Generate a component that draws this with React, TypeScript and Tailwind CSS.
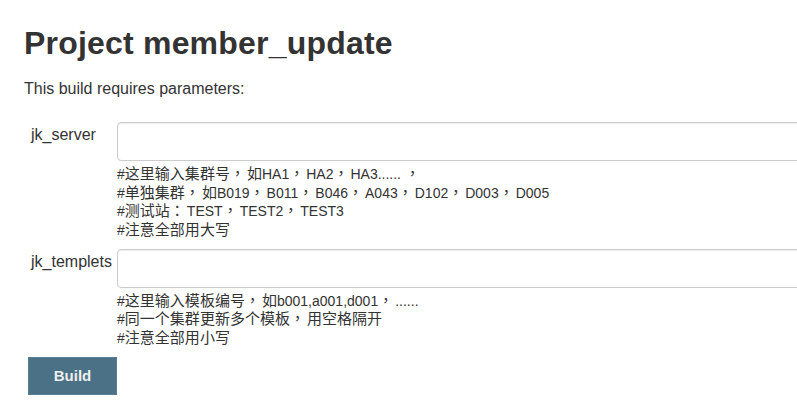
const font = { fontFamily: '"Liberation Sans", "Noto Sans CJK SC", Arial, sans-serif' };
const punctFont = { fontFamily: '"Noto Sans CJK TC", "Noto Sans CJK SC", sans-serif' };

interface Param {
  name: string;
  help: string[];
}

const params: Param[] = [
  {
    name: 'jk_server',
    help: [
      '#这里输入集群号，如HA1，HA2，HA3...... ，',
      '#单独集群，如B019，B011，B046，A043，D102，D003，D005',
      '#测试站：TEST，TEST2，TEST3',
      '#注意全部用大写',
    ],
  },
  {
    name: 'jk_templets',
    help: ['#这里输入模板编号，如b001,a001,d001，......', '#同一个集群更新多个模板，用空格隔开', '#注意全部用小写'],
  },
];

// CJK runs render a touch larger than the latin text, like the original page's fallback font
function HelpLine({ text }: { text: string }) {
  const parts = text.split(/([\u3000-\u303f\u4e00-\u9fff\uff00-\uffef]+)/).filter(Boolean);
  return (
    <div>
      {parts.map((part, i) =>
        /[\u3000-\u303f\u4e00-\u9fff\uff00-\uffef]/.test(part) ? (
          <span key={i} className="text-[15px]">
            {part.split('').map((ch, j) =>
              ch === '，' || ch === '：' ? (
                <span key={j} className="tracking-[2px] leading-[0]" style={punctFont}>
                  {ch}
                </span>
              ) : (
                ch
              )
            )}
          </span>
        ) : (
          <span key={i}>{part}</span>
        )
      )}
    </div>
  );
}

export default function App() {
  return (
    <div className="w-[797px] h-[408px] overflow-hidden bg-white text-[#333]" style={font}>
      <div className="px-6 pt-[26px]">
        <h1 className="text-[32px] leading-[35px] font-bold tracking-[0.2px]">Project member_update</h1>
        <p className="mt-[17.5px] text-[16px] leading-[20px]">This build requires parameters:</p>

        {/* Parameter rows */}
        <div className="mt-[23.5px] flex flex-col gap-[9.5px]">
          {params.map((p) => (
            <div key={p.name} className="flex">
              <div className="w-[93px] shrink-0 pl-[7px] pt-[3px] text-[16px] leading-[20px]">{p.name}</div>
              <div className="flex-1 min-w-0">
                <input
                  type="text"
                  className="block w-[720px] h-[39px] rounded-[4px] border border-[#ccc] bg-white px-3 shadow-[inset_0_1px_1px_rgba(0,0,0,0.075)] outline-none"
                />
                <div className="mt-[4px] text-[14px] leading-[18.5px] text-[#333] whitespace-nowrap">
                  {p.help.map((line, i) => (
                    <HelpLine key={i} text={line} />
                  ))}
                </div>
              </div>
            </div>
          ))}
        </div>

        <button className="block mt-[10px] ml-[4px] w-[89px] h-[38px] bg-[#4b7186] border border-[#5a7f93] text-[#eee] text-[15px] leading-[36px] font-bold">
          Build
        </button>
      </div>
    </div>
  );
}
